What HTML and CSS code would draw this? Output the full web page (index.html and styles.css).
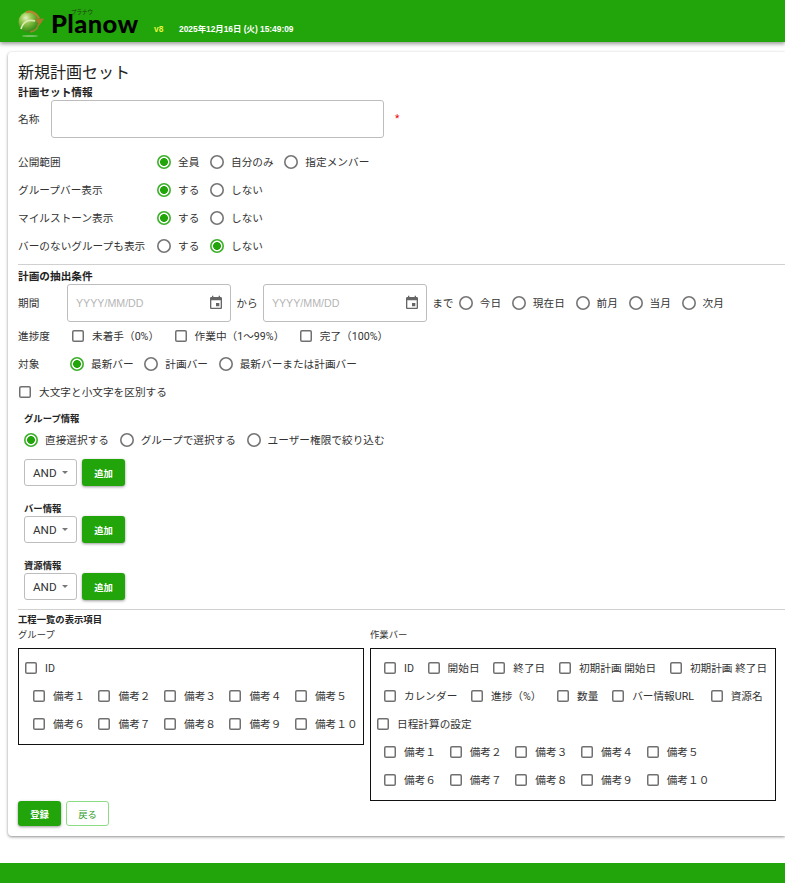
FILE: index.html
```html
<!DOCTYPE html>
<html lang="ja">
<head>
<meta charset="utf-8">
<title>新規計画セット</title>
<link rel="stylesheet" href="styles.css">
</head>
<body>
<header class="topbar">
  <div class="logo">
    <svg class="globe" width="28" height="30" viewBox="0 0 28 30">
      <defs>
        <radialGradient id="sph" cx="0.35" cy="0.3" r="0.8">
          <stop offset="0" stop-color="#e4efc4"/>
          <stop offset="0.3" stop-color="#9ccb54"/>
          <stop offset="0.7" stop-color="#4d9a22"/>
          <stop offset="1" stop-color="#2a7212"/>
        </radialGradient>
      </defs>
      <ellipse cx="12" cy="27" rx="8" ry="1.1" fill="#74c262"/>
      <circle cx="11" cy="13" r="10.5" fill="url(#sph)"/>
      <path d="M3 20C5 13 10 10 17 12" fill="none" stroke="#dcebb6" stroke-width="1.6"/>
      <path d="M8 3.2A10.5 10.5 0 0 1 21 9.5" fill="none" stroke="#b8862f" stroke-width="2.2"/>
      <path d="M17 10L26 9.5 21.5 16.5Z" fill="#a97a2a"/>
      <path d="M20.5 15A10 10 0 0 1 12 23" fill="none" stroke="#8f8a2e" stroke-width="1.6"/>
    </svg>
    <span class="wordmark">Planow<span class="kana">プラナウ</span></span>
  </div>
  <span class="version">v8</span>
  <span class="clock">2025年12月16日 (火) 15:49:09</span>
</header>

<main class="card">
  <h1 class="title">新規計画セット</h1>
  <h2 class="heading">計画セット情報</h2>
  <div class="name-row">
    <label class="name-label">名称</label>
    <input class="name-input" type="text">
    <span class="required">*</span>
  </div>

  <div class="settings">
    <div class="row">
      <span class="row-label">公開範囲</span>
      <label class="opt"><input type="radio" name="a" checked>全員</label>
      <label class="opt"><input type="radio" name="a">自分のみ</label>
      <label class="opt"><input type="radio" name="a">指定メンバー</label>
    </div>
    <div class="row">
      <span class="row-label">グループバー表示</span>
      <label class="opt"><input type="radio" name="b" checked>する</label>
      <label class="opt"><input type="radio" name="b">しない</label>
    </div>
    <div class="row">
      <span class="row-label">マイルストーン表示</span>
      <label class="opt"><input type="radio" name="c" checked>する</label>
      <label class="opt"><input type="radio" name="c">しない</label>
    </div>
    <div class="row">
      <span class="row-label">バーのないグループも表示</span>
      <label class="opt"><input type="radio" name="d">する</label>
      <label class="opt"><input type="radio" name="d" checked>しない</label>
    </div>
  </div>

  <hr class="rule rule-a">
  <h2 class="heading">計画の抽出条件</h2>
  <div class="date-row">
    <span class="date-label">期間</span>
    <div class="date-field">
      <span class="placeholder">YYYY/MM/DD</span>
      <svg class="cal" width="16" height="16" viewBox="0 0 24 24"><path d="M17 12h-5v5h5v-5zM16 1v2H8V1H6v2H5c-1.11 0-1.99.9-1.99 2L3 19c0 1.1.89 2 2 2h14c1.1 0 2-.9 2-2V5c0-1.1-.9-2-2-2h-1V1h-2zm3 18H5V8h14v11z" fill="#666"/></svg>
    </div>
    <span class="date-text">から</span>
    <div class="date-field">
      <span class="placeholder">YYYY/MM/DD</span>
      <svg class="cal" width="16" height="16" viewBox="0 0 24 24"><path d="M17 12h-5v5h5v-5zM16 1v2H8V1H6v2H5c-1.11 0-1.99.9-1.99 2L3 19c0 1.1.89 2 2 2h14c1.1 0 2-.9 2-2V5c0-1.1-.9-2-2-2h-1V1h-2zm3 18H5V8h14v11z" fill="#666"/></svg>
    </div>
    <span class="date-text">まで</span>
    <div class="presets">
      <label class="opt"><input type="radio" name="e">今日</label>
      <label class="opt"><input type="radio" name="e">現在日</label>
      <label class="opt"><input type="radio" name="e">前月</label>
      <label class="opt"><input type="radio" name="e">当月</label>
      <label class="opt"><input type="radio" name="e">次月</label>
    </div>
  </div>
  <div class="row">
    <span class="label-progress">進捗度</span>
    <label class="chk chk-wide"><input type="checkbox">未着手（0%）</label>
    <label class="chk chk-wide"><input type="checkbox">作業中（1〜99%）</label>
    <label class="chk chk-wide"><input type="checkbox">完了（100%）</label>
  </div>
  <div class="row">
    <span class="label-target">対象</span>
    <label class="opt"><input type="radio" name="f" checked>最新バー</label>
    <label class="opt"><input type="radio" name="f">計画バー</label>
    <label class="opt"><input type="radio" name="f">最新バーまたは計画バー</label>
  </div>
  <div class="row row-case">
    <label class="chk"><input type="checkbox">大文字と小文字を区別する</label>
  </div>

  <section class="filters">
    <h3 class="subheading sub-group">グループ情報</h3>
    <div class="row row-group">
      <label class="opt"><input type="radio" name="g" checked>直接選択する</label>
      <label class="opt"><input type="radio" name="g">グループで選択する</label>
      <label class="opt"><input type="radio" name="g">ユーザー権限で絞り込む</label>
    </div>
    <div class="filter-controls first">
      <div class="select">AND<i class="caret"></i></div>
      <button class="btn" type="button">追加</button>
    </div>
    <h3 class="subheading sub-next">バー情報</h3>
    <div class="filter-controls">
      <div class="select">AND<i class="caret"></i></div>
      <button class="btn" type="button">追加</button>
    </div>
    <h3 class="subheading sub-next">資源情報</h3>
    <div class="filter-controls">
      <div class="select">AND<i class="caret"></i></div>
      <button class="btn" type="button">追加</button>
    </div>
  </section>

  <hr class="rule rule-b">
  <h2 class="heading heading-small">工程一覧の表示項目</h2>
  <div class="columns">
    <div class="col-group">
      <div class="col-title">グループ</div>
      <div class="box">
        <div class="row box-outdent"><label class="chk"><input type="checkbox">ID</label></div>
        <div class="row">
          <label class="chk"><input type="checkbox">備考１</label>
          <label class="chk"><input type="checkbox">備考２</label>
          <label class="chk"><input type="checkbox">備考３</label>
          <label class="chk"><input type="checkbox">備考４</label>
          <label class="chk"><input type="checkbox">備考５</label>
        </div>
        <div class="row">
          <label class="chk"><input type="checkbox">備考６</label>
          <label class="chk"><input type="checkbox">備考７</label>
          <label class="chk"><input type="checkbox">備考８</label>
          <label class="chk"><input type="checkbox">備考９</label>
          <label class="chk"><input type="checkbox">備考１０</label>
        </div>
      </div>
    </div>
    <div class="col-bar">
      <div class="col-title">作業バー</div>
      <div class="box">
        <div class="row">
          <label class="chk"><input type="checkbox">ID</label>
          <label class="chk"><input type="checkbox">開始日</label>
          <label class="chk"><input type="checkbox">終了日</label>
          <label class="chk"><input type="checkbox">初期計画 開始日</label>
          <label class="chk"><input type="checkbox">初期計画 終了日</label>
        </div>
        <div class="row">
          <label class="chk"><input type="checkbox">カレンダー</label>
          <label class="chk chk-pct"><input type="checkbox">進捗（%）</label>
          <label class="chk"><input type="checkbox">数量</label>
          <label class="chk chk-url"><input type="checkbox">バー情報URL</label>
          <label class="chk"><input type="checkbox">資源名</label>
        </div>
        <div class="row box-outdent"><label class="chk"><input type="checkbox">日程計算の設定</label></div>
        <div class="row">
          <label class="chk"><input type="checkbox">備考１</label>
          <label class="chk"><input type="checkbox">備考２</label>
          <label class="chk"><input type="checkbox">備考３</label>
          <label class="chk"><input type="checkbox">備考４</label>
          <label class="chk"><input type="checkbox">備考５</label>
        </div>
        <div class="row">
          <label class="chk"><input type="checkbox">備考６</label>
          <label class="chk"><input type="checkbox">備考７</label>
          <label class="chk"><input type="checkbox">備考８</label>
          <label class="chk"><input type="checkbox">備考９</label>
          <label class="chk"><input type="checkbox">備考１０</label>
        </div>
      </div>
    </div>
  </div>
  <div class="actions">
    <button class="btn btn-main" type="button">登録</button>
    <button class="btn-outline" type="button">戻る</button>
  </div>
</main>
<footer class="bottombar"></footer>
</body>
</html>
```

FILE: styles.css
```css
* { box-sizing: border-box; }
html, body { margin: 0; padding: 0; }
body {
  width: 785px;
  height: 883px;
  overflow: hidden;
  background: #fff;
  color: #333;
  font-family: Roboto, "Noto Sans CJK JP", sans-serif;
  font-size: 10.67px;
  line-height: 14px;
}
.topbar {
  height: 42px;
  background: #22a50b;
  box-shadow: 0 2px 4px rgba(0,0,0,.4);
  display: flex;
  align-items: flex-start;
  padding-left: 18px;
  position: relative;
}
.logo { display: flex; align-items: flex-start; width: 136px; padding-top: 9px; }
.globe { flex: none; }
.wordmark {
  position: relative;
  margin: 1px 0 0 5px;
  color: #000;
  font: 900 25.5px/26px Lato, sans-serif;
  letter-spacing: .4px;
}
.kana {
  position: absolute;
  left: 20px;
  top: -1px;
  font: 400 5.5px/6px "Noto Sans CJK JP", sans-serif;
  letter-spacing: 0;
  color: #1a3d10;
  white-space: nowrap;
}
.version, .clock {
  margin-top: 23px;
  font: 700 8.4px/12px "Liberation Sans", "Noto Sans CJK JP", sans-serif;
}
.version { color: #e6f53c; width: 25px; }
.clock { color: #fff; }

.card {
  margin: 10px 0 0 8px;
  height: 784px;
  padding: 10px 0 0 10px;
  background: #fff;
  border-radius: 4px 0 0 4px;
  box-shadow: 0 1px 3px rgba(0,0,0,.45);
}
.title { margin: 0; height: 20px; padding-top: 1px; font-size: 16px; line-height: 20px; font-weight: 400; color: #222; }
.heading { margin: 4px 0 0; height: 12px; padding-top: 1px; font-size: 10.67px; line-height: 12px; font-weight: 700; color: #222; }
.heading-small { font-size: 9.33px; }
.name-row { display: flex; align-items: center; margin-top: 2px; height: 38px; }
.name-label { width: 33px; padding-top: 2px; }
.name-input {
  width: 333px;
  height: 38px;
  border: 1px solid #bdbdbd;
  border-radius: 3px;
  background: #fff;
}
.required { margin-left: 11px; color: #e00; font-size: 10px; }
.settings { margin-top: 10px; }
.row { display: flex; align-items: center; height: 28px; white-space: nowrap; }
.row-label { width: 139px; padding-top: 2px; }
.opt { display: flex; align-items: center; gap: 7px; margin-right: 10.7px; padding-top: 2px; }
.chk { display: flex; align-items: center; gap: 8px; margin-right: 13.7px; padding-top: 2px; }
.chk-wide { margin-right: 15.5px; }
.chk-pct { margin-right: 15.7px; }
.chk-url { margin-right: 16.7px; }
.col-group .chk { margin-right: 13.5px; }

input[type=radio], input[type=checkbox] {
  appearance: none;
  margin: 0 0 2px;
  flex: none;
  background: #fff;
}
input[type=radio] {
  width: 14px;
  height: 14px;
  border-radius: 50%;
  box-shadow: inset 0 0 0 1.6px #757575;
}
input[type=radio]:checked {
  box-shadow: inset 0 0 0 1.6px #3cb02a;
  background: radial-gradient(circle, #22a50b 0 3.6px, #fff 4.2px);
}
input[type=checkbox] {
  width: 12px;
  height: 12px;
  border-radius: 2px;
  box-shadow: inset 0 0 0 1.5px #707070;
}

.rule { border: 0; border-top: 1px solid #d0d0d0; margin: 0; }
.rule-a { margin-top: 4px; }
.rule-b { margin-top: 9px; }
.rule-a + .heading { margin-top: 5px; }
.rule-b + .heading { margin-top: 3px; }

.date-row { display: flex; align-items: center; gap: 5.3px; margin-top: 2px; height: 38px; white-space: nowrap; }
.date-label { width: 43.7px; padding-top: 2px; }
.date-text { padding-top: 2px; }
.date-field {
  width: 164px;
  height: 38px;
  border: 1px solid #bdbdbd;
  border-radius: 3px;
  display: flex;
  align-items: center;
  justify-content: space-between;
  padding: 0 6px 0 8px;
  background: #fff;
}
.placeholder { color: #b5b5b5; font-family: "Liberation Sans", sans-serif; font-size: 10.67px; }
.cal { flex: none; }
.presets { display: flex; }
.label-progress { width: 54px; padding-top: 2px; }
.label-target { width: 52px; padding-top: 2px; }
.row-case { padding-left: 1px; }

.filters { padding-left: 6px; }
.subheading { margin: 0; height: 12px; padding-top: 1px; font-size: 9.33px; line-height: 12px; font-weight: 700; color: #222; }
.sub-group { margin-top: 6px; }
.sub-next { margin-top: 16px; }
.row-group { margin-top: 2px; }
.filter-controls { display: flex; gap: 5px; margin-top: 2px; }
.filter-controls.first { margin-top: 5px; }
.select {
  width: 53px;
  height: 27px;
  border: 1px solid #bdbdbd;
  border-radius: 3px;
  display: flex;
  align-items: center;
  padding-left: 8px;
  font-size: 11.7px;
  color: #333;
}
.caret {
  margin-left: 5px;
  border-left: 3.5px solid transparent;
  border-right: 3.5px solid transparent;
  border-top: 3.5px solid #777;
}
.btn {
  width: 43px;
  height: 27px;
  padding: 0;
  border: 0;
  border-radius: 3px;
  background: #22a50b;
  color: #fff;
  font: 700 9.33px/12px "Noto Sans CJK JP", sans-serif;
  box-shadow: 0 1px 3px rgba(0,0,0,.4);
}
.columns { display: flex; align-items: flex-start; gap: 6px; margin-top: 3px; }
.col-group { width: 346px; }
.col-bar { width: 406px; }
.col-title { font-size: 9.33px; line-height: 12px; height: 14px; padding-top: 1px; margin-bottom: 6px; }
.box { border: 1px solid #111; padding: 5px 6px 6px 13px; }
.col-group .box { padding-left: 14px; }
.box-outdent { margin-left: -7px; }
.col-group .box-outdent { margin-left: -8px; }
.actions { display: flex; gap: 5px; height: 25px; }
.btn-main { height: 25px; }
.btn-outline {
  width: 43px;
  height: 25px;
  padding: 0;
  border: 1px solid #8edb86;
  border-radius: 3px;
  background: #fff;
  color: #2d9a1e;
  font: 400 9.33px/12px "Noto Sans CJK JP", sans-serif;
}
.bottombar { height: 20px; margin-top: 27px; background: #22a50b; }
```
